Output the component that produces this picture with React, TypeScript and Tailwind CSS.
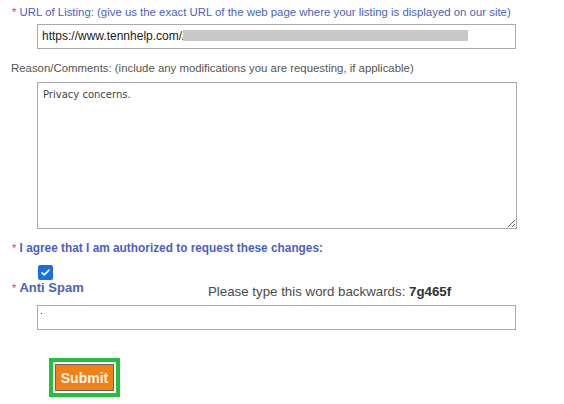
import React from 'react';

export default function App() {
  return (
    <div className="w-[564px] h-[404px] bg-white font-['Liberation_Sans',Arial,sans-serif] overflow-hidden">
      <div className="pt-[5px] pl-[12px] text-[11.4px] leading-[14px] text-[#4a5fc4]">
        <span className="text-[#d9463a]">*</span> URL of Listing: (give us the exact URL of the web page where your listing is displayed on our site)
      </div>

      <div className="relative ml-[37px] mt-[4px] w-[479px] h-[25px]">
        <input
          readOnly
          value="https://www.tennhelp.com/A"
          className="w-full h-full border border-[#a9a9a9] px-[4px] text-[12px] text-[#222] outline-none"
        />
        {/* blurred part of the URL */}
        <div className="absolute left-[146px] top-[7px] w-[285px] h-[11px] bg-[#c8c8c8]" />
      </div>

      <div className="mt-[13px] pl-[11px] text-[11.4px] leading-[14px] text-[#555]">
        Reason/Comments: (include any modifications you are requesting, if applicable)
      </div>

      <textarea
        readOnly
        defaultValue="Privacy concerns."
        className="block ml-[37px] mt-[7px] w-[480px] h-[147px] border border-[#a9a9a9] px-[5px] py-[6px] font-['DejaVu_Sans',sans-serif] text-[10px] leading-[12px] text-[#444] outline-none"
      />

      <div className="mt-[12px] pl-[12px] text-[11.85px] leading-[15px] font-bold text-[#4a5fc4]">
        <span className="text-[#d9463a] font-normal text-[11px]">*</span> I agree that I am authorized to request these changes:
      </div>

      <div className="ml-[38px] mt-[9px] w-[15px] h-[15px] rounded-[2px] bg-[#1a6fe0] flex items-center justify-center">
        <svg viewBox="0 0 16 16" className="w-[11px] h-[11px]" fill="none" stroke="white" strokeWidth="2.4" strokeLinecap="round" strokeLinejoin="round">
          <path d="M3 8.5l3.2 3L13 4.5" />
        </svg>
      </div>

      <div className="flex">
        <div className="w-[208px] pl-[12px] text-[13px] leading-[16px] font-bold text-[#4a5fc4]">
          <span className="text-[#d9463a] font-normal text-[11px]">*</span> Anti Spam
        </div>
        <div className="mt-[4px] text-[13.3px] leading-[16px] text-[#4a4a4a]">
          Please type this word backwards: <span className="font-bold text-[#333]">7g465f</span>
        </div>
      </div>

      <div className="relative ml-[37px] mt-[5px] w-[479px] h-[25px] border border-[#a9a9a9]">
        <div className="absolute left-[3px] top-[7px] w-[1px] h-[1px] bg-[#333]" />
      </div>

      <div className="ml-[49px] mt-[28px] w-[71px] h-[39px] border-4 border-[#22c03c] p-[2px]">
        <button className="w-full h-full bg-[#f28018] border border-[#6e6258] text-[14px] leading-none font-bold text-[#fff6e6]">
          Submit
        </button>
      </div>
    </div>
  );
}
